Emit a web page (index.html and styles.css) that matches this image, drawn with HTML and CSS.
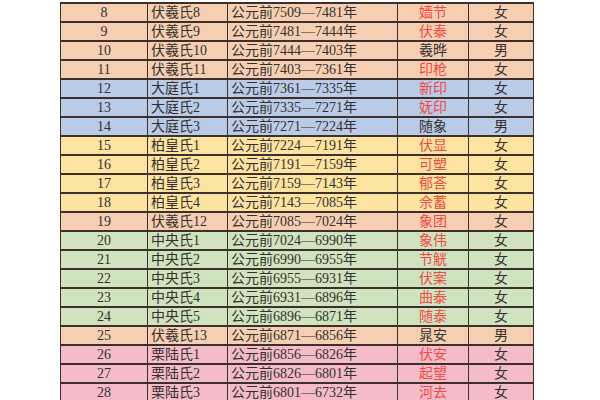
FILE: index.html
```html
<!DOCTYPE html>
<html lang="zh">
<head>
<meta charset="utf-8">
<link rel="stylesheet" href="styles.css">
</head>
<body>
<table class="tbl">
<colgroup><col class="c1"><col class="c2"><col class="c3"><col class="c4"><col class="c5"></colgroup>
<tbody>
<tr class="peach"><td class="num">8</td><td>伏羲氏8</td><td>公元前7509—7481年</td><td class="nm red">嫱节</td><td class="sx">女</td></tr>
<tr class="peach"><td class="num">9</td><td>伏羲氏9</td><td>公元前7481—7444年</td><td class="nm red">伏泰</td><td class="sx">女</td></tr>
<tr class="peach"><td class="num">10</td><td>伏羲氏10</td><td>公元前7444—7403年</td><td class="nm">羲晔</td><td class="sx">男</td></tr>
<tr class="peach"><td class="num">11</td><td>伏羲氏11</td><td>公元前7403—7361年</td><td class="nm red">印枪</td><td class="sx">女</td></tr>
<tr class="blue"><td class="num">12</td><td>大庭氏1</td><td>公元前7361—7335年</td><td class="nm red">新印</td><td class="sx">女</td></tr>
<tr class="blue"><td class="num">13</td><td>大庭氏2</td><td>公元前7335—7271年</td><td class="nm red">妩印</td><td class="sx">女</td></tr>
<tr class="blue"><td class="num">14</td><td>大庭氏3</td><td>公元前7271—7224年</td><td class="nm">随象</td><td class="sx">男</td></tr>
<tr class="yellow"><td class="num">15</td><td>柏皇氏1</td><td>公元前7224—7191年</td><td class="nm red">伏显</td><td class="sx">女</td></tr>
<tr class="yellow"><td class="num">16</td><td>柏皇氏2</td><td>公元前7191—7159年</td><td class="nm red">可塑</td><td class="sx">女</td></tr>
<tr class="yellow"><td class="num">17</td><td>柏皇氏3</td><td>公元前7159—7143年</td><td class="nm red">郁荅</td><td class="sx">女</td></tr>
<tr class="yellow"><td class="num">18</td><td>柏皇氏4</td><td>公元前7143—7085年</td><td class="nm red">佘蓄</td><td class="sx">女</td></tr>
<tr class="peach"><td class="num">19</td><td>伏羲氏12</td><td>公元前7085—7024年</td><td class="nm red">象团</td><td class="sx">女</td></tr>
<tr class="green"><td class="num">20</td><td>中央氏1</td><td>公元前7024—6990年</td><td class="nm red">象伟</td><td class="sx">女</td></tr>
<tr class="green"><td class="num">21</td><td>中央氏2</td><td>公元前6990—6955年</td><td class="nm red">节觥</td><td class="sx">女</td></tr>
<tr class="green"><td class="num">22</td><td>中央氏3</td><td>公元前6955—6931年</td><td class="nm red">伏案</td><td class="sx">女</td></tr>
<tr class="green"><td class="num">23</td><td>中央氏4</td><td>公元前6931—6896年</td><td class="nm red">曲泰</td><td class="sx">女</td></tr>
<tr class="green"><td class="num">24</td><td>中央氏5</td><td>公元前6896—6871年</td><td class="nm red">随泰</td><td class="sx">女</td></tr>
<tr class="peach"><td class="num">25</td><td>伏羲氏13</td><td>公元前6871—6856年</td><td class="nm">晁安</td><td class="sx">男</td></tr>
<tr class="pink"><td class="num">26</td><td>栗陆氏1</td><td>公元前6856—6826年</td><td class="nm red">伏安</td><td class="sx">女</td></tr>
<tr class="pink"><td class="num">27</td><td>栗陆氏2</td><td>公元前6826—6801年</td><td class="nm red">起望</td><td class="sx">女</td></tr>
<tr class="pink"><td class="num">28</td><td>栗陆氏3</td><td>公元前6801—6732年</td><td class="nm red">河去</td><td class="sx">女</td></tr>
</tbody>
</table>
</body>
</html>
```

FILE: styles.css
```css
html, body {
  margin: 0;
  padding: 0;
  background: #ffffff;
  overflow: hidden;
  height: 400px;
}
body {
  padding-top: 2px;
  padding-left: 60px;
}
.tbl {
  border-collapse: collapse;
  table-layout: fixed;
  width: 473px;
  font-family: "Liberation Serif", "Noto Sans CJK SC", serif;
  font-size: 14px;
  color: #353030;
}
.c1 { width: 87px; }
.c2 { width: 80px; }
.c3 { width: 170px; }
.c4 { width: 71px; }
.c5 { width: 65px; }
.tbl td {
  height: 17px;
  padding: 0 0 0 3px;
  line-height: 17px;
  border-top: 2px solid #3d302c;
  border-bottom: 2px solid #3d302c;
  border-left: 1px solid #3d302c;
  border-right: 1px solid #3d302c;
  white-space: nowrap;
  overflow: hidden;
}
.tbl td.num, .tbl td.nm, .tbl td.sx {
  text-align: center;
  padding: 0;
}
.red { color: #ef4a46; }
.peach td { background: #f6cfb2; }
.blue td { background: #b9cbe6; }
.yellow td { background: #fce3a0; }
.green td { background: #cfe3bf; }
.pink td { background: #f4bcc8; }
```
